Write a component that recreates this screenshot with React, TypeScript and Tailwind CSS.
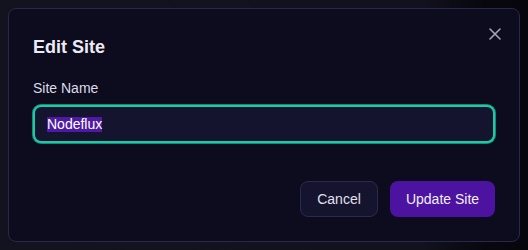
import React from "react";

export default function App() {
  return (
    <div
      className="w-[528px] h-[250px] flex items-center justify-center bg-[linear-gradient(90deg,#13121f_0%,#12111e_80%,#07070d_92%,#06060c_100%)]"
      style={{ fontFamily: '"Liberation Sans", Arial, sans-serif' }}
    >
      <div className="relative w-[512px] h-[234px] rounded-lg border border-[#28284a] bg-[#0d0c1f] px-6 pt-6 pb-6 flex flex-col">
        <button className="absolute right-[18px] top-[19px] text-[#a2a2b4]">
          <svg width="12" height="12" viewBox="0 0 12 12" fill="none" stroke="currentColor" strokeWidth="1.6" strokeLinecap="round">
            <path d="M1 1 11 11" />
            <path d="M11 1 1 11" />
          </svg>
        </button>
        <h2 className="text-lg leading-7 font-bold text-[#ecebf3]">Edit Site</h2>
        <label className="mt-[17px] text-sm leading-5 text-[#dcdbe6]">Site Name</label>
        <div className="mt-[7px] h-[38px] rounded-lg border-2 border-[#20c9a5] ring-1 ring-[#138a73] bg-[#15142e] flex items-center px-3 text-sm text-white">
          <span className="bg-[#4e1aa3] leading-[15px]">Nodeflux</span>
        </div>
        <div className="mt-auto flex justify-end gap-3">
          <button className="h-9 rounded-lg border border-[#2a2a4e] bg-[#15142e] text-sm text-[#e2e1ea] w-[78px] whitespace-nowrap">Cancel</button>
          <button className="h-9 rounded-lg bg-[#4c12a0] text-sm text-[#f0eefa] w-[105px] whitespace-nowrap">Update Site</button>
        </div>
      </div>
    </div>
  );
}
